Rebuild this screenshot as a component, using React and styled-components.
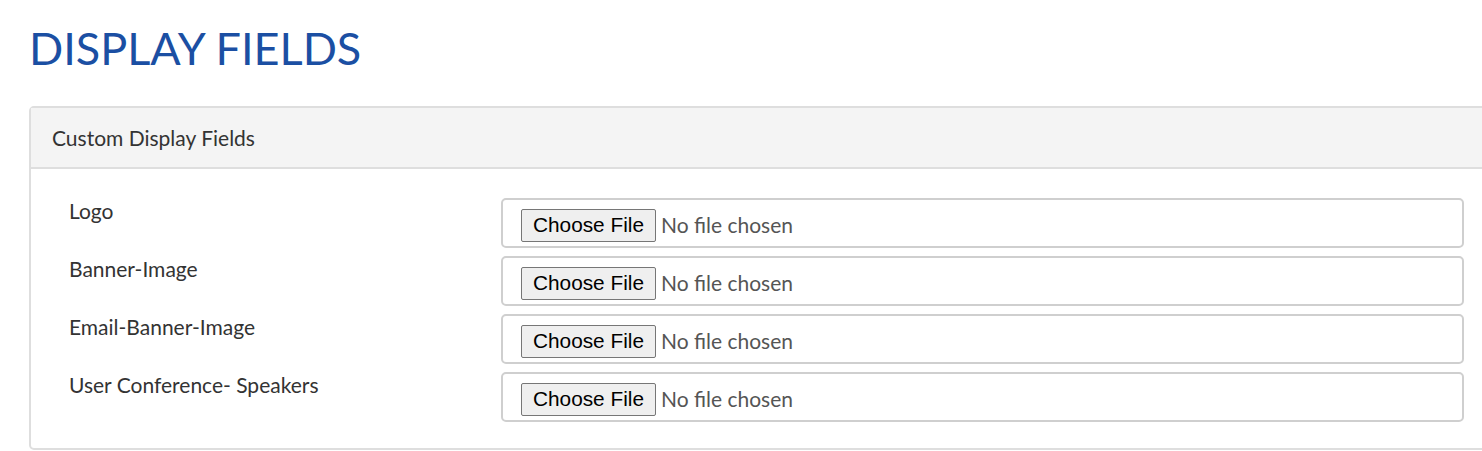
import React from 'react';
import styled, { createGlobalStyle } from 'styled-components';

const GlobalStyle = createGlobalStyle`
  html, body {
    margin: 0;
    padding: 0;
    background: #fff;
    overflow: hidden;
  }
  body {
    font-family: Lato, "Open Sans", sans-serif;
    color: #333;
  }
`;

const Page = styled.div`
  padding: 23px 0 0 29px;
  width: 1482px;
  box-sizing: border-box;
`;

const Title = styled.h1`
  margin: 0 0 33px 0;
  font-family: Lato, sans-serif;
  font-weight: 400;
  font-size: 45px;
  line-height: 50px;
  color: #1b4fa3;
`;

const Panel = styled.section`
  width: 1480px;
  border: 2px solid #dedede;
  border-radius: 5px;
  background: #fff;
`;

const PanelHeader = styled.div`
  background: #f4f4f4;
  border-bottom: 2px solid #dedede;
  padding: 0 21px;
  height: 59px;
  display: flex;
  align-items: center;
  font-size: 21px;
  color: #333;
`;

const PanelBody = styled.div`
  padding: 29px 0 26px 38px;
  display: flex;
  flex-direction: column;
  gap: 8px;
`;

const Row = styled.div`
  display: grid;
  grid-template-columns: 432px 963px;
  align-items: start;
`;

const Label = styled.label`
  font-size: 21px;
  line-height: 26px;
  color: #333;
`;

const FileBox = styled.div`
  height: 50px;
  box-sizing: border-box;
  border: 2px solid #cfcfcf;
  border-radius: 5px;
  display: flex;
  align-items: center;
  padding: 4px 0 0 18px;
`;

const FileInput = styled.input`
  font-family: Lato, sans-serif;
  font-size: 21px;
  color: #555;

  &::file-selector-button {
    font-family: "Liberation Sans", Arial, sans-serif;
    font-size: 20.8px;
    color: #000;
    background: #efefef;
    border: 1px solid #767676;
    border-radius: 2px;
    height: 33px;
    padding: 0 11px;
    margin-right: 5px;
  }
`;

const fields = ['Logo', 'Banner-Image', 'Email-Banner-Image', 'User Conference- Speakers'];

const App = () => {
  return (
    <Page>
      <GlobalStyle />
      <Title>DISPLAY FIELDS</Title>
      <Panel>
        <PanelHeader>Custom Display Fields</PanelHeader>
        <PanelBody>
          {fields.map((name) => (
            <Row key={name}>
              <Label>{name}</Label>
              <FileBox>
                <FileInput type="file" />
              </FileBox>
            </Row>
          ))}
        </PanelBody>
      </Panel>
    </Page>
  );
};

export default App;
